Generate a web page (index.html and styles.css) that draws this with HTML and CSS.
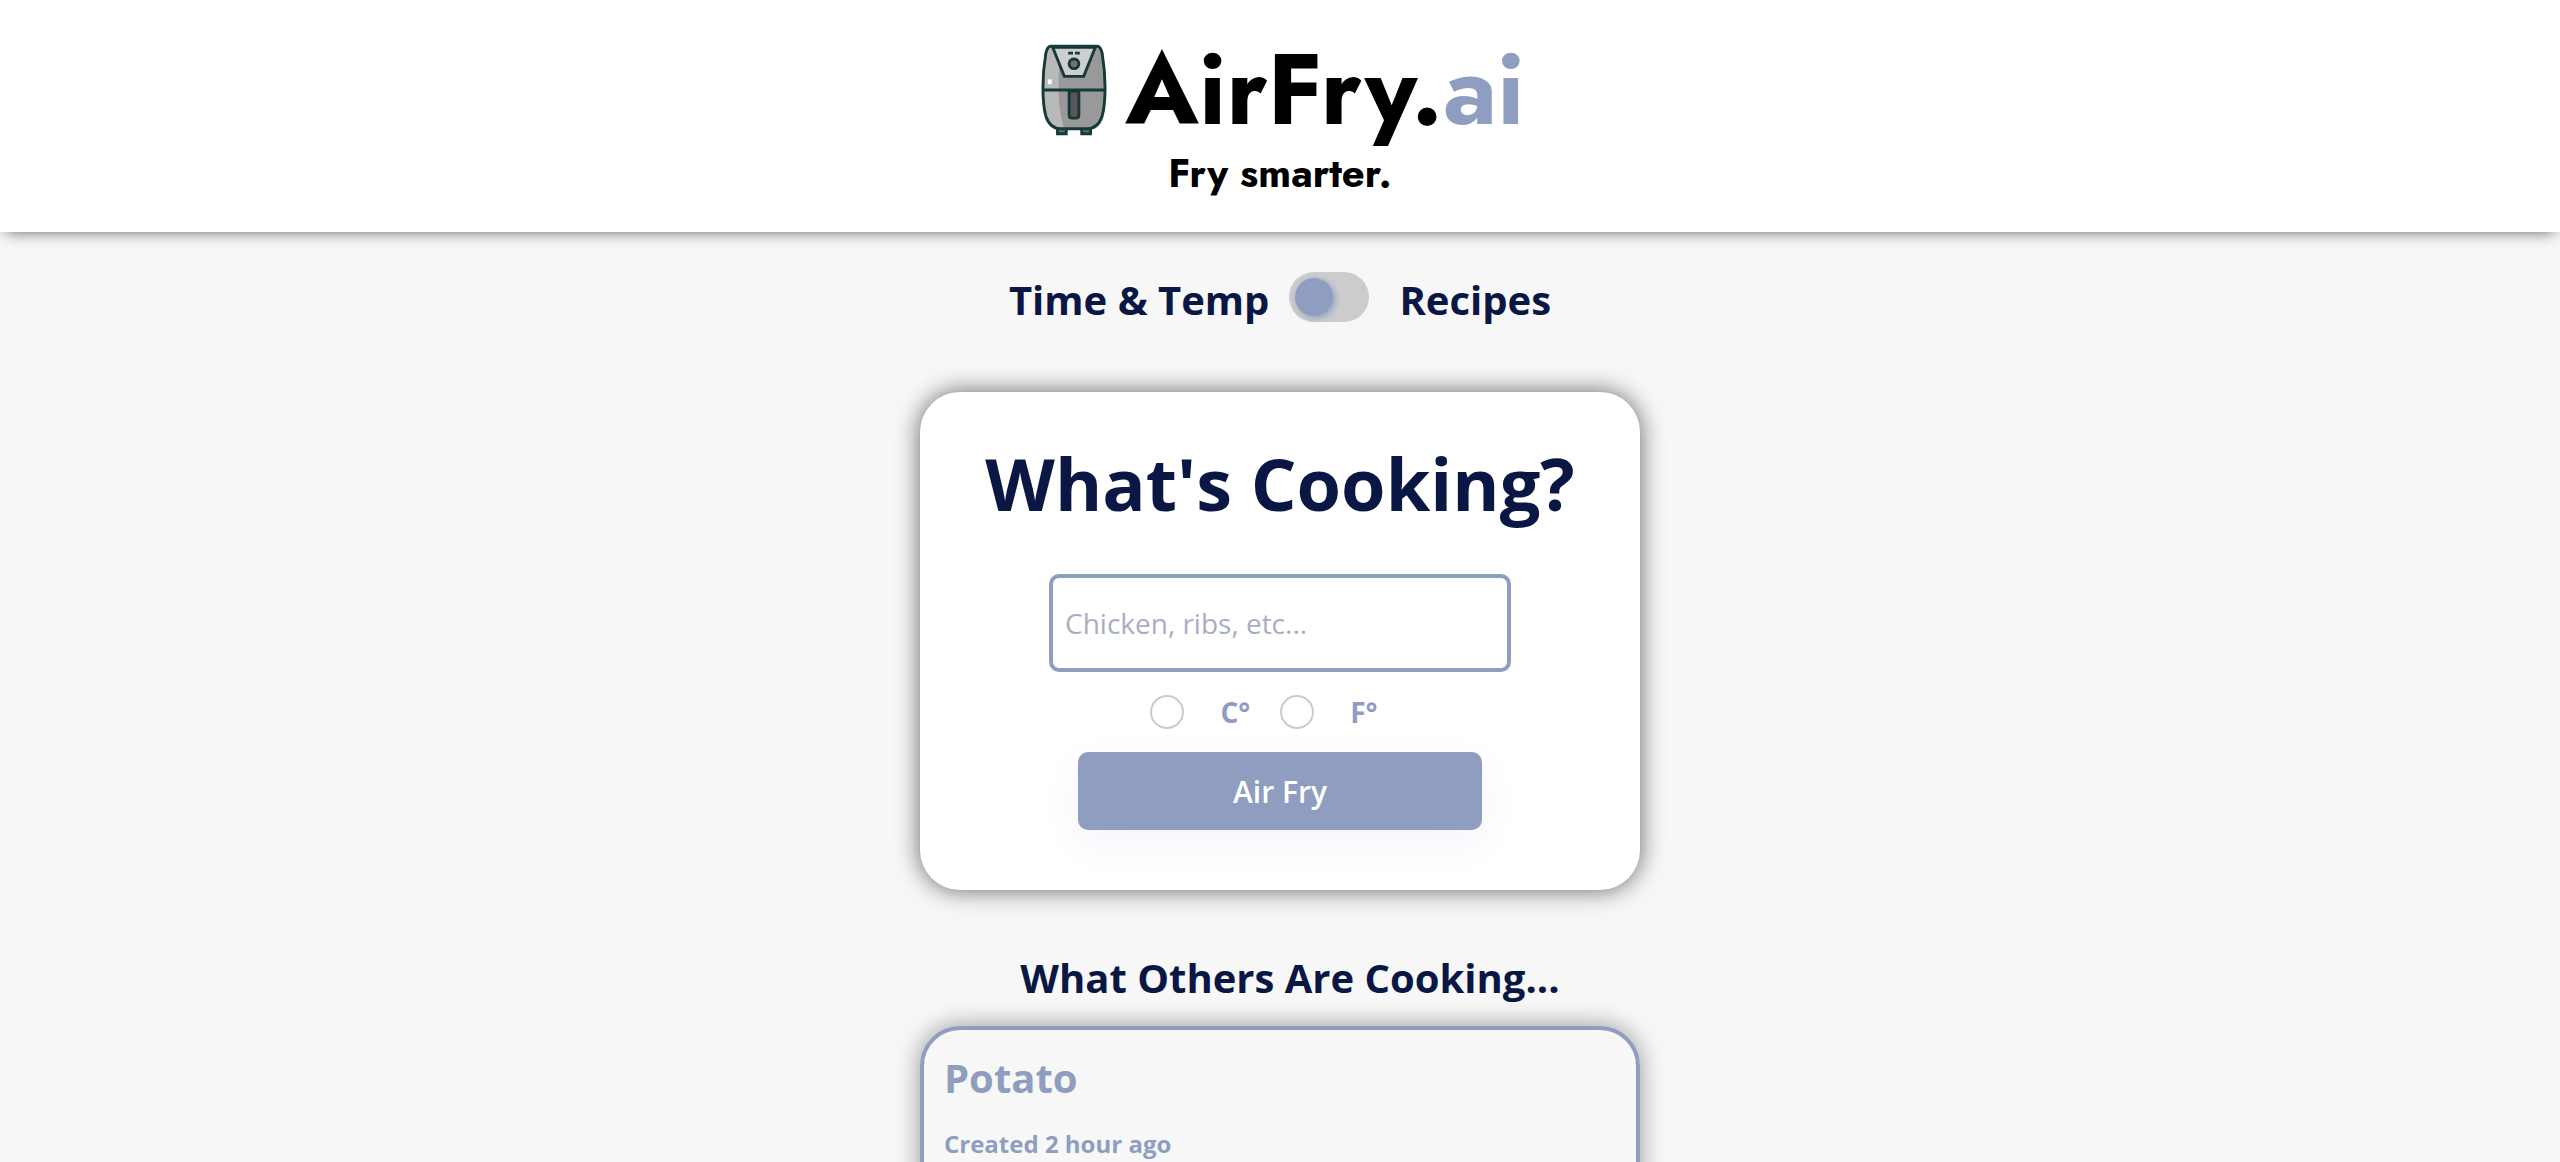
FILE: index.html
```html
<!DOCTYPE html>
<html lang="en">
<head>
<meta charset="utf-8">
<meta name="viewport" content="width=device-width, initial-scale=1">
<title>AirFry.ai</title>
<link rel="stylesheet" href="styles.css">
</head>
<body>
<header class="header">
  <div class="brand">
    <svg class="logo" viewBox="0 0 68 94" aria-hidden="true">
      <path d="M17 86h9v6h-9zM42 86h9v6h-9z" fill="#5b706f" stroke="#143a39" stroke-width="3"/>
      <path d="M10 2h48c3 0 4 3 5 7 4 24 4 50 0 65-3 9-8 13-16 13H21C13 87 8 83 5 74 1 59 1 33 5 9c1-4 2-7 5-7z" fill="#999"/>
      <path d="M10 2h12c-5 24-6 60 2 85h-3C13 87 8 83 5 74 1 59 1 33 5 9c1-4 2-7 5-7z" fill="#b9b9b9"/>
      <path d="M12 3h44L44 33H24z" fill="#cecece" stroke="#143a39" stroke-width="3"/>
      <path d="M10 2h48c3 0 4 3 5 7 4 24 4 50 0 65-3 9-8 13-16 13H21C13 87 8 83 5 74 1 59 1 33 5 9c1-4 2-7 5-7zM2 47h64" fill="none" stroke="#143a39" stroke-width="3"/>
      <path d="M29 48h10v25q0 3-3 3h-4q-3 0-3-3z" fill="#5b5558" stroke="#143a39" stroke-width="3"/>
      <circle cx="34" cy="20" r="5" fill="#777174" stroke="#143a39" stroke-width="3"/>
      <path d="M28 9h5M35 9h5" stroke="#143a39" stroke-width="3"/>
      <path d="M7 36h4v5H7z" fill="#fff"/>
    </svg>
    <h1 class="name">AirFry.<span class="accent">ai</span></h1>
  </div>
  <p class="tagline">Fry smarter.</p>
</header>
<main class="main">
  <div class="mode">
    <label for="mode">Time &amp; Temp</label>
    <input class="switch" type="checkbox" role="switch" id="mode">
    <label class="mode-alt" for="mode">Recipes</label>
  </div>
  <form class="card">
    <h2 class="title"><label for="food">What's Cooking?</label></h2>
    <input class="food" id="food" type="text" placeholder="Chicken, ribs, etc...">
    <div class="units">
      <input class="radio" type="radio" name="unit" id="c"><label for="c">C°</label>
      <input class="radio" type="radio" name="unit" id="f"><label for="f">F°</label>
    </div>
    <button class="submit" type="button">Air Fry</button>
  </form>
  <h2 class="others">What Others Are Cooking...</h2>
  <article class="recipe">
    <h3 class="recipe-name">Potato</h3>
    <p class="recipe-date">Created 2 hour ago</p>
  </article>
</main>
</body>
</html>
```
FILE: styles.css
```css
* { box-sizing: border-box; }
body {
  margin: 0;
  background: #f7f7f7;
  color: #0a1744;
  font-family: "Open Sans", sans-serif;
}
h1, h2, h3, p { margin: 0; }
.header {
  display: flex;
  flex-direction: column;
  align-items: center;
  padding: 32px 16px;
  background: #fff;
  color: #000;
  font-family: Jost, Lato, sans-serif;
  box-shadow: 0 6px 14px -6px rgba(0, 0, 0, 0.6);
}
.brand { display: flex; align-items: center; gap: 18px; height: 116px; padding-left: 6px; }
.logo { width: 66px; height: 92px; }
.name { font-size: 100px; line-height: 116px; font-weight: 700; }
.accent { color: #8f9dc1; }
.tagline { font-size: 40px; line-height: 50px; padding-bottom: 2px; font-weight: 700; }
.main {
  display: flex;
  flex-direction: column;
  align-items: center;
  padding: 40px 16px;
}
.mode {
  display: flex;
  align-items: flex-start;
  gap: 20px;
  font-size: 40px;
  line-height: 56px;
  font-weight: 700;
}
.mode-alt { margin-left: 10px; }
.switch {
  appearance: none;
  width: 80px;
  height: 50px;
  margin: 0;
  padding: 6px;
  border-radius: 25px;
  background: #ccc;
}
.switch::before {
  content: "";
  display: block;
  width: 38px;
  height: 38px;
  border-radius: 50%;
  background: #8f9dc1;
  box-shadow: 2px 2px 6px #8f9dc1;
}
.switch:checked::before { margin-left: 30px; }
.card {
  display: flex;
  flex-direction: column;
  align-items: center;
  width: 100%;
  max-width: 720px;
  margin-top: 64px;
  padding: 40px 40px 60px;
  border-radius: 40px;
  background: #fff;
  box-shadow: 0 0 24px rgba(0, 0, 0, 0.6);
}
.title { font-size: 72px; line-height: 102px; font-weight: 700; }
.food {
  width: 100%;
  max-width: 462px;
  height: 98px;
  margin-top: 40px;
  padding: 0 12px;
  border: 4px solid #8f9dc1;
  border-radius: 10px;
  background: #fff;
  color: #0a1744;
  font: 28px "Open Sans", sans-serif;
}
.food::placeholder { color: #a9adc2; opacity: 1; }
.units {
  display: flex;
  align-items: center;
  height: 80px;
  padding-right: 62px;
  color: #8f9dc1;
  font-size: 28px;
  font-weight: 700;
}
.radio {
  appearance: none;
  width: 34px;
  height: 34px;
  margin: 0 36px 0 30px;
  border: 2px solid #ccc;
  border-radius: 50%;
}
.radio:checked { border: 10px solid #8f9dc1; }
.submit {
  width: 100%;
  max-width: 404px;
  height: 78px;
  border: 0;
  border-radius: 10px;
  background: #8f9dc1;
  color: #fff;
  font: 600 30px "Open Sans", sans-serif;
  box-shadow: 0 14px 40px rgba(80, 80, 220, 0.06);
}
.others {
  margin-top: 60px;
  padding-left: 20px;
  font-size: 40px;
  line-height: 56px;
  font-weight: 700;
}
.recipe {
  width: 100%;
  max-width: 720px;
  margin-top: 20px;
  padding: 20px 20px 60px;
  border: 4px solid #8f9dc1;
  border-radius: 40px;
  color: #8f9dc1;
  box-shadow: 0 0 24px rgba(0, 0, 0, 0.4);
}
.recipe-name { font-size: 40px; line-height: 56px; }
.recipe-date { margin-top: 20px; font-size: 24px; line-height: 36px; font-weight: 700; }
```
